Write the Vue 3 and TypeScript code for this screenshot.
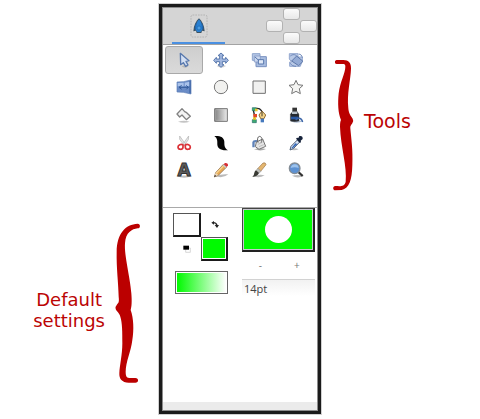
<script setup lang="ts">
import { ref } from 'vue'

interface Shape {
  d: string
  fill?: string
  stroke?: string
  width?: number
}

interface Tool {
  name: string
  shapes: Shape[]
  letter?: string
}

const blue = '#5878ad'
const pale = '#b5c7e6'
const shadow = '#d3d3d3'

const tools: Tool[] = [
  {
    name: 'Transform',
    shapes: [
      { d: 'M20 46 Q30 39 40 46 Q31 54 20 46Z', fill: '#b4b4b4' },
      { d: 'M16 7 L42 29 L33 31 L39 42 L32 46 L25 35 L17 41Z', fill: '#d3dff2', stroke: blue, width: 4 },
    ],
  },
  {
    name: 'Smooth move',
    shapes: [
      { d: 'M14 45 Q28 38 42 45 Q28 54 14 45Z', fill: shadow },
      {
        d: 'M27 6 L36 14 H31 V24 H41 V19 L49 28 L41 37 V32 H31 V41 H36 L27 49 L18 41 H23 V32 H13 V37 L5 28 L13 19 V24 H23 V14 H18Z',
        fill: '#a3b8df',
        stroke: blue,
        width: 3,
      },
    ],
  },
  {
    name: 'Scale',
    shapes: [
      { d: 'M7 8 H30 V28 H7Z', fill: pale, stroke: '#8fa5cd', width: 3 },
      { d: 'M18 17 H49 V47 H18Z', fill: '#a9bde0', stroke: '#7890bf', width: 3 },
      { d: 'M13 15 H31 V33 H13Z', fill: '#c9d7ef', stroke: '#7890bf', width: 2 },
      { d: 'M25 26 H41 V39 H25Z', fill: '#dfe8f7', stroke: blue, width: 3 },
      { d: 'M15 18 L27 29', fill: 'none', stroke: blue, width: 3 },
    ],
  },
  {
    name: 'Rotate',
    shapes: [
      { d: 'M7 8 H33 V18 H46 V28 L40 46 H8 V33 H14 L7 24Z', fill: '#b9c9e6', stroke: '#94a8cf', width: 3 },
      { d: 'M29 15 L48 31 L35 44 L14 30Z', fill: '#94abd5', stroke: '#5e78a9', width: 3 },
      { d: 'M10 15 C18 9 24 10 29 15 M35 9 C41 10 45 13 46 20 M10 37 C13 43 20 46 27 46', fill: 'none', stroke: '#6c87b9', width: 3 },
    ],
  },
  {
    name: 'Mirror',
    shapes: [
      { d: 'M6 12 L25 11 L48 6 V48 L25 43 L6 42Z', fill: '#6a8cc6', stroke: '#5b7cb5', width: 2 },
      { d: 'M8 15 L26 14 V25 H8Z M29 14 L44 11 V24 H29Z', fill: '#a9c2ea' },
      { d: 'M12 28 H40 M20 22 L12 28 L20 34 M34 22 L40 28 L34 34', fill: 'none', stroke: '#335b9b', width: 3 },
      { d: 'M45 8 V46', fill: 'none', stroke: '#335b9b', width: 3 },
    ],
  },
  {
    name: 'Circle',
    shapes: [{ d: 'M7 27 A20 20 0 1 0 47 27 A20 20 0 1 0 7 27Z', fill: '#f1f1ef', stroke: '#777', width: 3 }],
  },
  {
    name: 'Rectangle',
    shapes: [{ d: 'M9 9 H46 V46 H9Z', fill: '#f1f1f0', stroke: '#707070', width: 3 }],
  },
  {
    name: 'Star',
    shapes: [
      { d: 'M27 7 L33 20 L48 22 L37 32 L40 47 L27 40 L14 47 L17 32 L6 22 L21 20Z', fill: '#f4f4f2', stroke: '#777', width: 3 },
    ],
  },
  {
    name: 'Polygon',
    shapes: [
      { d: 'M9 47 Q27 41 44 47 Q27 53 9 47Z', fill: '#c4c4c4' },
      { d: 'M6 24 L21 8 L29 17 L35 20 L46 31 L34 41 L21 27 L14 33Z', fill: '#f3f3f3', stroke: '#808080', width: 4 },
    ],
  },
  {
    name: 'Gradient',
    shapes: [
      { d: 'M8 8 H46 V46 H8Z', fill: 'url(#gray-fade)', stroke: '#737373', width: 3 },
      { d: 'M11 11 H43 V43 H11Z', fill: 'none', stroke: '#d4d4d4', width: 1 },
    ],
  },
  {
    name: 'Spline',
    shapes: [
      { d: 'M12 8 C6 20 20 28 12 44 M13 9 C25 4 35 8 37 22', fill: 'none', stroke: '#222', width: 4 },
      { d: 'M7 5 H19 V14 H7Z M7 41 H19 V50 H7Z', fill: '#3eae72', stroke: '#2a6969', width: 2 },
      { d: 'M10 24 H21 V34 H10Z', fill: '#e44728' },
      { d: 'M15 8 H23 V16 H15Z M9 34 H18 V41 H9Z', fill: '#e8c630' },
      { d: 'M36 15 L47 27 L42 38 H32 L27 27Z', fill: '#f5d58a', stroke: '#8f6a32', width: 3 },
      { d: 'M32 38 H42 V49 H32Z', fill: '#4579bd' },
      { d: 'M36 17 V31', fill: 'none', stroke: '#443d2a', width: 3 },
    ],
  },
  {
    name: 'Draw',
    shapes: [
      { d: 'M10 46 Q28 40 49 46 Q27 54 10 46Z', fill: '#aebed4' },
      { d: 'M16 5 H30 V16 H16Z', fill: '#343434' },
      { d: 'M17 16 H30 L36 25 V45 Q23 49 10 45 V25Z', fill: '#24282e', stroke: '#555', width: 1 },
      { d: 'M15 17 H31 V24 H15Z', fill: '#bbc4cc' },
      { d: 'M12 32 H34 V40 H12Z', fill: '#2959a5' },
      { d: 'M26 42 C33 34 43 34 47 48', fill: 'none', stroke: '#3b65a8', width: 4 },
    ],
  },
  {
    name: 'Cutout',
    shapes: [
      { d: 'M14 6 L34 34 L29 36 L14 16Z M41 6 L21 34 L26 36 L40 17Z', fill: '#e6e6e6', stroke: '#b2b2b2', width: 2 },
      {
        d: 'M24 33 C18 29 9 33 9 39 C9 48 23 48 24 40Z M31 33 C37 29 46 33 46 39 C46 48 32 48 31 40Z',
        fill: '#fff',
        stroke: '#db3036',
        width: 5,
      },
    ],
  },
  {
    name: 'Width',
    shapes: [
      { d: 'M7 6 C26 5 36 10 37 23 C37 34 37 42 48 49 C30 49 17 46 16 32 C16 22 17 13 7 6Z', fill: '#050505' },
    ],
  },
  {
    name: 'Fill',
    shapes: [
      { d: 'M12 46 Q28 40 48 45 Q34 53 12 46Z', fill: '#aaa' },
      { d: 'M7 40 V24 Q9 16 24 19 V25 H14 V40Z', fill: '#5f82b8' },
      { d: 'M19 24 L38 15 L47 37 L27 46 L16 38Z', fill: '#e5e5e5', stroke: '#747474', width: 3 },
      { d: 'M24 26 C19 9 28 3 34 10 C37 14 36 21 33 27', fill: 'none', stroke: '#666', width: 3 },
      { d: 'M24 31 L37 25 M27 38 L41 32', fill: 'none', stroke: '#aaa', width: 2 },
    ],
  },
  {
    name: 'Eyedropper',
    shapes: [
      { d: 'M9 46 Q23 40 35 46 Q21 52 9 46Z', fill: '#bbb' },
      { d: 'M31 18 L38 24 L20 43 L9 48 L12 37Z', fill: '#d9e5f6', stroke: '#4b5b75', width: 3 },
      { d: 'M25 28 L31 30 L18 42 L13 43Z', fill: '#2e63b4' },
      { d: 'M27 14 L30 11 L34 12 L37 6 Q48 4 47 15 L41 20 L42 24 L39 27Z', fill: '#17233b' },
    ],
  },
  {
    name: 'Text',
    letter: 'A',
    shapes: [{ d: 'M5 46 Q27 41 50 46 Q27 54 5 46Z', fill: '#bbb' }],
  },
  {
    name: 'Sketch',
    shapes: [
      { d: 'M9 46 Q28 38 49 40 Q35 53 9 46Z', fill: '#b9b9b9' },
      { d: 'M34 10 L43 19 L19 43 L7 48 L11 35Z', fill: '#e7a953', stroke: '#765333', width: 2 },
      { d: 'M11 35 L19 42 L7 48Z', fill: '#ead9bf' },
      { d: 'M9 42 L13 45 L6 48Z', fill: '#252525' },
      { d: 'M35 10 L39 6 Q49 5 48 14 L43 18Z', fill: '#d72e35' },
      { d: 'M32 13 L35 10 L43 18 L40 21Z', fill: '#ccc' },
      { d: 'M34 15 L13 37', fill: 'none', stroke: '#f8d491', width: 4 },
    ],
  },
  {
    name: 'Brush',
    shapes: [
      { d: 'M11 46 Q28 38 44 43 Q28 53 11 46Z', fill: '#bbb' },
      { d: 'M39 6 Q47 3 48 11 L32 31 L23 23Z', fill: '#e4b66f', stroke: '#9b7448', width: 2 },
      { d: 'M24 22 L33 31 L27 37 L18 28Z', fill: '#bdbdb8', stroke: '#777', width: 1 },
      { d: 'M18 28 L27 36 Q23 47 7 48 Q13 41 13 35 Q14 30 18 28Z', fill: '#393b34' },
    ],
  },
  {
    name: 'Zoom',
    shapes: [
      { d: 'M15 44 Q32 39 50 45 Q31 54 15 44Z', fill: '#bbb' },
      { d: 'M34 33 L47 45', fill: 'none', stroke: '#333', width: 7 },
      { d: 'M7 22 A16 16 0 1 0 39 22 A16 16 0 1 0 7 22Z', fill: '#5c91d2', stroke: '#838c95', width: 4 },
      { d: 'M11 21 Q14 9 24 10 Q34 11 35 21 Q23 17 11 21Z', fill: '#9cc2ec' },
    ],
  },
]

const pads = ['up', 'left', 'right', 'down']
const active = ref('Transform')
const points = ref(14)
const swapped = ref(false)

function resize(step: number) {
  points.value = Math.max(1, points.value + step)
}
</script>

<template>
  <main class="page">
    <section class="note note-left">
      <p class="caption">Default<br />settings</p>
      <svg class="brace-left" viewBox="284 24 78 480" aria-hidden="true">
        <path
          d="M352 26 C361 26 361 40 352 40 C335 42 316 52 314 85 C311 120 330 190 333 235 C335 260 334 275 331 285 C340 310 341 345 336 375 C332 410 316 440 316 470 C316 486 320 489 330 489 H345 C356 490 356 503 345 503 H325 C305 503 296 492 297 475 C298 450 306 420 306 385 C306 350 306 325 300 305 C297 293 289 290 286 282 Q284 275 291 267 C297 262 296 255 295 245 C294 200 288 160 289 110 C290 55 315 28 352 26Z"
        />
      </svg>
    </section>

    <section class="panel">
      <header class="head">
        <button class="tab" type="button" aria-label="Toolbox">
          <svg viewBox="0 0 54 72" aria-hidden="true">
            <rect x="3" y="3" width="48" height="66" rx="5" fill="none" stroke="#a3a3a3" stroke-width="2" stroke-dasharray="5 3" />
            <path d="M27 13 C36 21 43 34 44 52 L36 50 L34 57 H20 L18 50 L10 52 C11 34 18 21 27 13Z" fill="#3b5263" />
            <path d="M27 16 C35 24 38 37 37 47 L32 54 H22 L17 47 C16 37 19 24 27 16Z" fill="#287fd1" />
            <path d="M14 46 C14 35 17 30 20 25 L18 46Z M40 46 C40 35 37 30 34 25 L36 46Z" fill="#1e66b1" />
            <circle cx="27" cy="42" r="6" fill="#4b9ce2" stroke="#1765ae" stroke-width="2" />
          </svg>
        </button>
        <div class="pads">
          <button v-for="p in pads" :key="p" :class="['pad', p]" type="button" :aria-label="p"></button>
        </div>
      </header>

      <div class="tools">
        <button
          v-for="tool in tools"
          :key="tool.name"
          type="button"
          :class="['tool', { active: active === tool.name }]"
          :aria-label="tool.name"
          @click="active = tool.name"
        >
          <svg viewBox="0 0 54 54" aria-hidden="true">
            <defs v-if="tool.name === 'Gradient'">
              <linearGradient id="gray-fade">
                <stop offset="0" stop-color="#808080" />
                <stop offset="1" stop-color="#ededed" />
              </linearGradient>
            </defs>
            <path
              v-for="(s, i) in tool.shapes"
              :key="i"
              :d="s.d"
              :fill="s.fill"
              :stroke="s.stroke"
              :stroke-width="s.width"
              stroke-linejoin="round"
            />
            <text v-if="tool.letter" class="letter" x="27" y="45" text-anchor="middle">{{ tool.letter }}</text>
          </svg>
        </button>
      </div>

      <div class="defaults">
        <div class="colors">
          <div class="swatches" :class="{ swapped }">
            <button class="swatch outline" type="button" aria-label="Outline color"></button>
            <button class="mini" type="button" aria-label="Swap colors" @click="swapped = !swapped">
              <svg viewBox="0 0 24 24" aria-hidden="true">
                <path d="M7 5 C14 5 17 8 18 14" fill="none" stroke="#222" stroke-width="4" />
                <path d="M1 5 L9 0 V11Z M18 21 L11 12 H24Z" fill="#222" />
              </svg>
            </button>
            <button class="mini" type="button" aria-label="Reset colors">
              <svg viewBox="0 0 24 24" aria-hidden="true">
                <path d="M8 9 H22 V22 H8Z" fill="#fff" stroke="#c4c4c4" stroke-width="2" />
                <path d="M1 2 H18 V14 H1Z" fill="#000" />
              </svg>
            </button>
            <button class="swatch fill" type="button" aria-label="Fill color"></button>
          </div>
          <button class="gradient" type="button" aria-label="Gradient"></button>
        </div>

        <div class="brush">
          <button class="preview" type="button" aria-label="Brush preview"><span class="dot"></span></button>
          <div class="steps">
            <button type="button" aria-label="Smaller" @click="resize(-1)">-</button>
            <button type="button" aria-label="Larger" @click="resize(1)">+</button>
          </div>
          <input class="size" type="text" aria-label="Brush size" :value="points + 'pt'" />
        </div>
      </div>

      <footer class="status"></footer>
    </section>

    <section class="note note-right">
      <svg class="brace-right" viewBox="39 27 63 396" aria-hidden="true">
        <path
          d="M50 30 H70 C86 30 94 40 93 56 C92 90 80 130 85 175 C86 190 92 198 98 206 Q102 213 97 220 C93 226 90 228 91 235 C94 270 99 300 97 345 C96 390 88 415 65 420 L46 421 C38 421 37 409 46 408 C58 408 74 412 77 395 C82 350 62 290 60 230 Q60 215 63 210 C54 190 53 160 56 130 C60 95 76 70 76 50 C76 43 74 42 68 42 H50 C43 42 43 30 50 30 Z"
        />
      </svg>
      <p class="caption">Tools</p>
    </section>
  </main>
</template>

<style>
body {
  background: #fff;
}
</style>

<style scoped>
.page {
  box-sizing: border-box;
  display: grid;
  grid-template-columns: 1fr 162px 1fr;
  min-height: 100vh;
  padding: 4px 0 5px;
}

button {
  box-sizing: border-box;
  margin: 0;
  padding: 0;
  border: 0;
  background: none;
  font: inherit;
  color: inherit;
}

svg {
  display: block;
  overflow: visible;
}

.note {
  display: flex;
  align-items: center;
  gap: 10px;
  color: #bb0404;
}

.note path {
  fill: #bb0000;
}

.note-left {
  align-self: end;
  justify-content: flex-end;
  padding: 0 18px 31px 0;
}

.note-right {
  align-self: start;
  padding: 55px 0 0 12px;
}

.caption {
  margin: 0;
  font: 19px/21px "DejaVu Sans", sans-serif;
  text-align: center;
}

.note-left .caption {
  padding-top: 14px;
  font-size: 18px;
}

.note-right .caption {
  padding-bottom: 8px;
}

.brace-left {
  width: 26px;
  height: 160px;
}

.brace-right {
  width: 21px;
  height: 132px;
}

.panel {
  display: flex;
  flex-direction: column;
  border: 3px solid #1b1b1b;
  outline: 1px solid #d0d0d0;
  box-shadow: inset 0 0 0 1px #8c8c8c;
  padding: 1px;
}

.head {
  display: flex;
  justify-content: space-between;
  height: 36px;
  padding-left: 9px;
  border-bottom: 1px solid #a3a3a3;
  background: #d5d5d5;
}

.tab {
  display: flex;
  justify-content: center;
  align-items: center;
  width: 53px;
  padding-top: 2px;
  border-bottom: 2px solid #4a90e2;
}

.tab svg {
  width: 18px;
  height: 24px;
}

.pads {
  display: grid;
  grid-template-columns: repeat(3, 17px);
  grid-template-rows: repeat(3, 12px);
}

.pad {
  border: 1px solid #b2b2b2;
  border-radius: 3px;
  background: linear-gradient(#fbfbfb, #e8e8e8);
}

.up {
  grid-area: 1 / 2;
}

.left {
  grid-area: 2 / 1;
}

.right {
  grid-area: 2 / 3;
}

.down {
  grid-area: 3 / 2;
}

.tools {
  display: grid;
  grid-template-columns: repeat(4, 1fr);
  grid-auto-rows: 1fr;
  height: 138px;
  padding: 1px 2px 23px;
}

.tool {
  display: flex;
  justify-content: center;
  align-items: center;
  border-radius: 3px;
}

.tool svg {
  width: 18px;
  height: 18px;
}

.tool.active {
  border: 1px solid #a9a9a9;
  background: linear-gradient(#cecece, #dadada);
}

.letter {
  font: bold 51px "DejaVu Sans", sans-serif;
  fill: #5c5c5c;
  stroke: #333;
  stroke-width: 3px;
}

.defaults {
  display: grid;
  grid-template-columns: 1fr 73px;
  padding-right: 2px;
  border-top: 1px solid #a9a9a9;
}

.colors {
  padding: 5px 0 0 10px;
}

.swatches {
  display: grid;
  grid-template-columns: 28px 27px;
  grid-auto-rows: 24px;
}

.swatch {
  border: 1px solid #555;
  border-right: 2px solid #1b1b1b;
  border-bottom: 2px solid #1b1b1b;
  box-shadow: inset 0 0 0 1px #fff;
}

.outline,
.swapped .fill {
  background: #fff;
}

.fill,
.swapped .outline {
  background: #00fa00;
}

.mini {
  display: flex;
  justify-content: center;
  align-items: center;
}

.mini svg {
  width: 8px;
  height: 8px;
}

.gradient {
  display: block;
  width: 53px;
  height: 23px;
  margin: 10px 0 0 2px;
  padding: 1px;
  border: 1px solid #666;
  background: linear-gradient(90deg, #00fa00, #fff) content-box;
}

.preview {
  display: flex;
  justify-content: center;
  align-items: center;
  width: 100%;
  height: 44px;
  border: 1px solid #444;
  border-right: 2px solid #222;
  border-bottom: 2px solid #222;
  background: #00fa00;
  box-shadow: inset 0 0 0 1px #c8c8d0;
}

.dot {
  width: 27px;
  height: 27px;
  border-radius: 50%;
  background: #fff;
}

.steps {
  display: grid;
  grid-template-columns: 1fr 1fr;
  height: 27px;
  font: 10px/27px "Open Sans", sans-serif;
  color: #777;
}

.size {
  box-sizing: border-box;
  display: block;
  width: 100%;
  height: 17px;
  margin: 0;
  padding: 0 2px;
  border: 0;
  border-top: 1px solid #d2d2d2;
  background: linear-gradient(#f2f2f2, #fff);
  font: 11px/16px "Open Sans", sans-serif;
  color: #444;
}

.status {
  height: 8px;
  margin-top: auto;
  background: #ebebeb;
}
</style>
